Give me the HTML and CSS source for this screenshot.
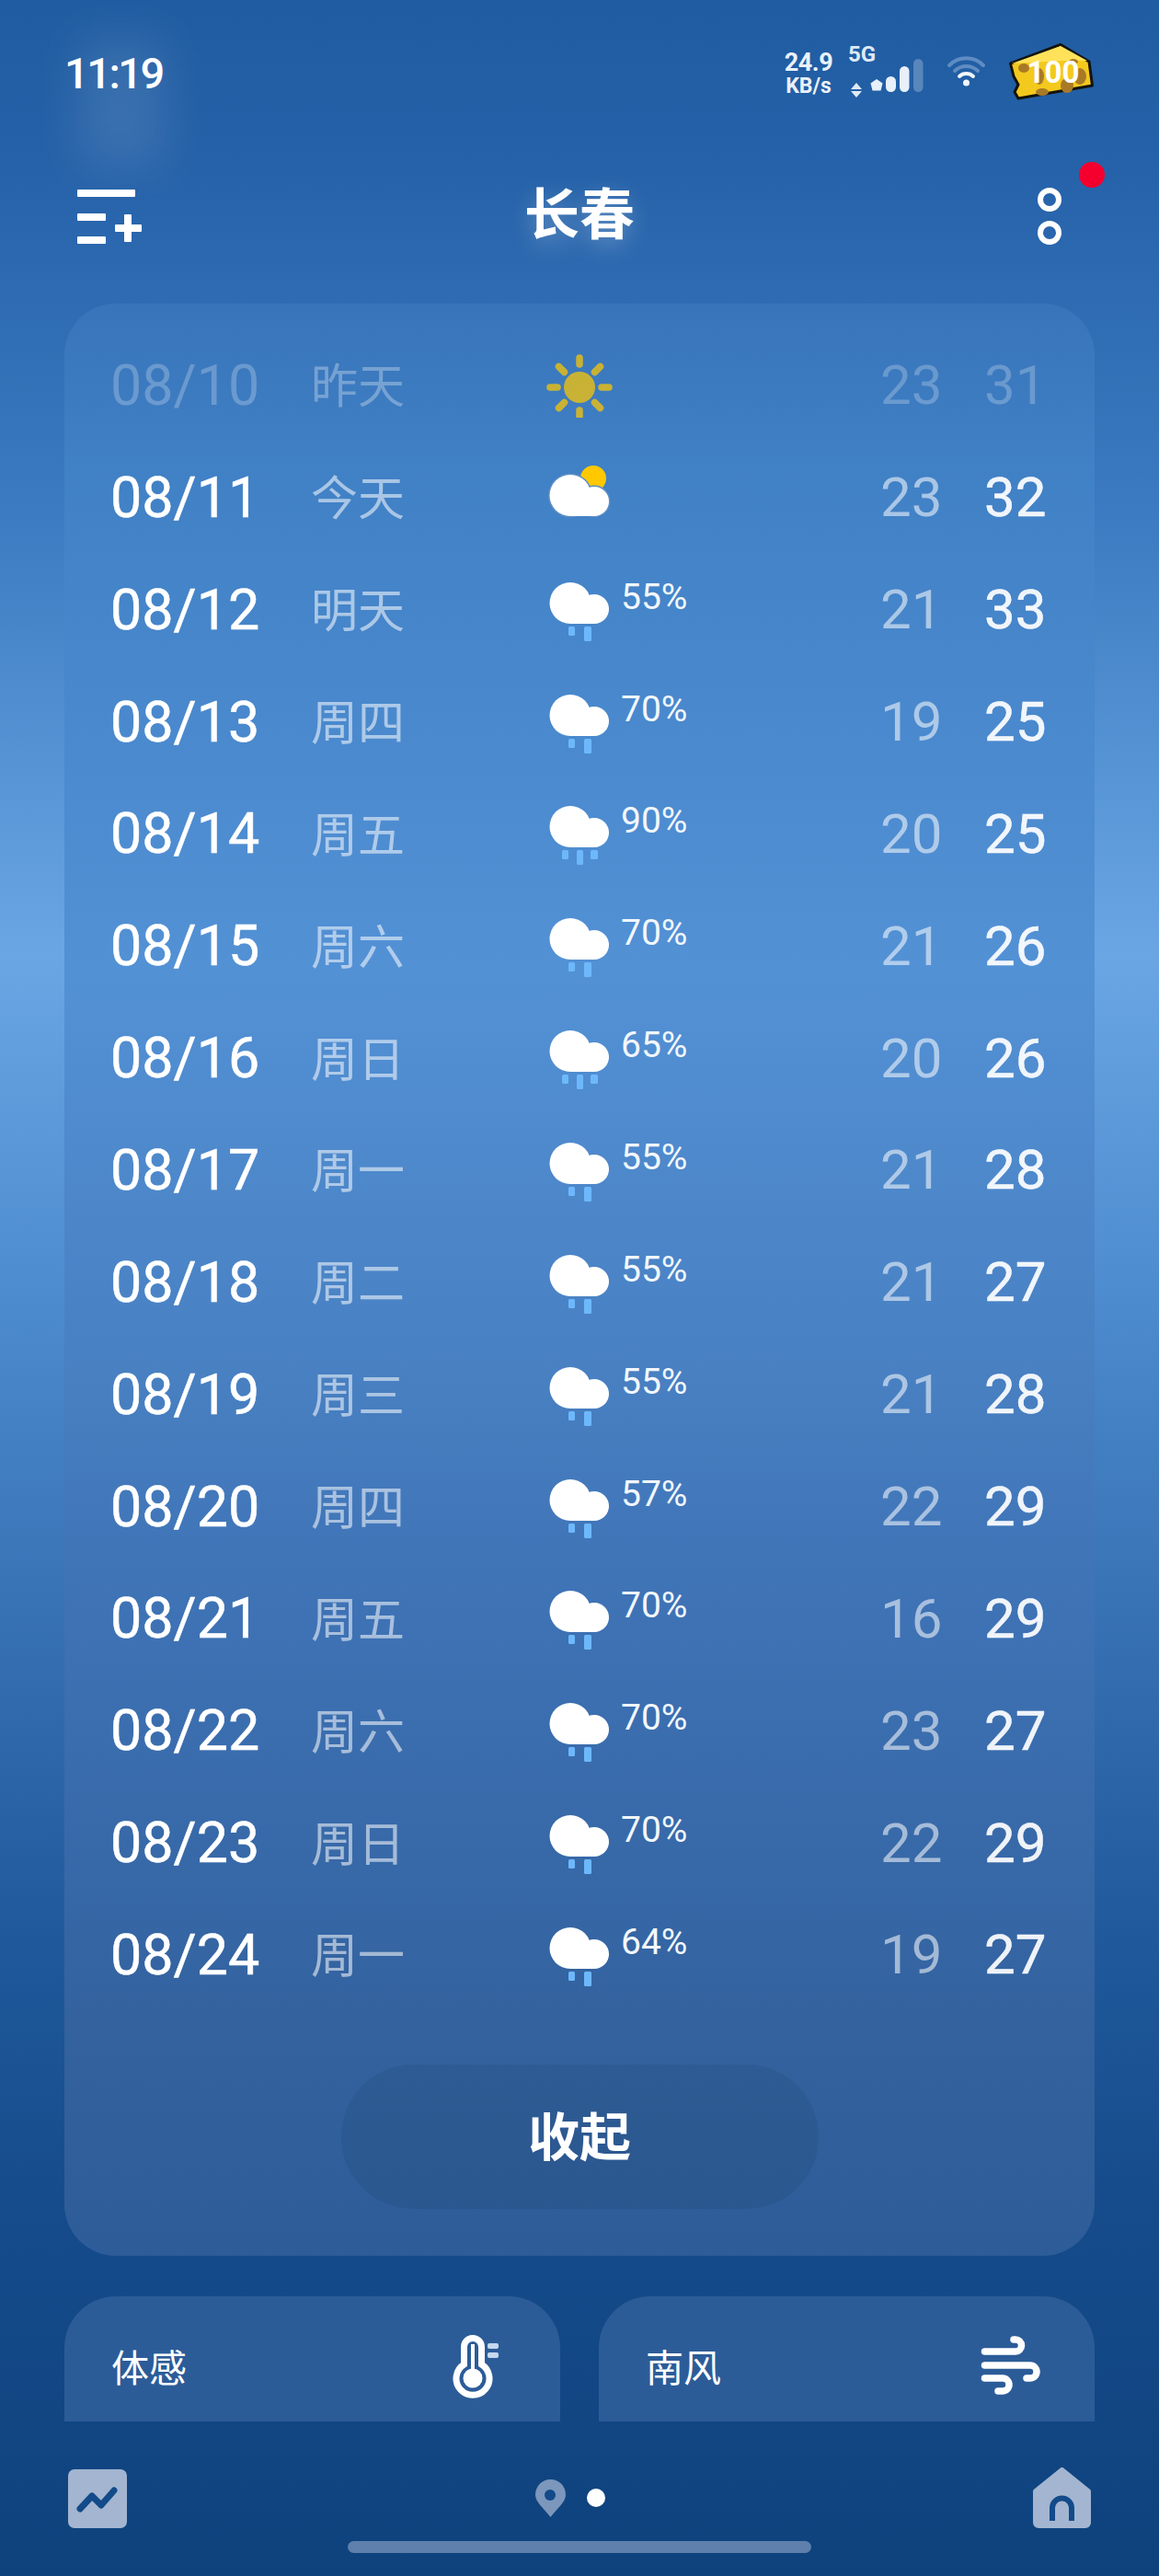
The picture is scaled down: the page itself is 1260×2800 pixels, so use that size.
FILE: index.html
```html
<!DOCTYPE html>
<html lang="zh-CN">

<head>
  <meta charset="UTF-8">
  <meta name="viewport" content="width=device-width, initial-scale=1.0">
  <title>长春</title>
  <link rel="stylesheet" href="styles.css">
</head>

<body>

  <svg class="defs" width="0" height="0">
    <symbol id="cloud" viewBox="0 0 72 72">
      <circle cx="26" cy="29.5" r="22.5" fill="#fff" />
      <circle cx="52" cy="36" r="16" fill="#fff" />
      <rect x="26" y="36" width="26" height="16" fill="#fff" />
    </symbol>
    <symbol id="rain2" viewBox="0 0 72 72">
      <use href="#cloud" width="72" height="72" />
      <rect x="24" y="55" width="7" height="10" rx="1.5" fill="#6db8fb" />
      <rect x="41" y="55" width="8" height="16" rx="1.5" fill="#6db8fb" />
    </symbol>
    <symbol id="rain3" viewBox="0 0 72 72">
      <use href="#cloud" width="72" height="72" />
      <rect x="17" y="55" width="7" height="10" rx="1.5" fill="#6db8fb" />
      <rect x="33" y="55" width="7" height="16" rx="1.5" fill="#6db8fb" />
      <rect x="48" y="55" width="8" height="10" rx="1.5" fill="#6db8fb" />
    </symbol>
  </svg>

  <div id="page">
    <div class="smudge"></div>

    <!-- status bar -->
    <div class="status">
      <div class="time">11:19</div>
      <div class="status-right">
        <div class="speed">
          <div class="speed-num">24.9</div>
          <div class="speed-unit">KB/s</div>
        </div>
        <svg class="signal" width="85" height="62" viewBox="920 47 85 62">
          <text x="922" y="67" class="net">5G</text>
          <path d="M931 90l6 7h-12zM931 106l6-7h-12z" fill="#dfe9f5" />
          <path d="M953 86l6.500 4.500-2 8h-9l-2-8z" fill="#e8f0f9" />
          <rect x="963" y="83" width="11" height="17" rx="5.500" fill="#e8f0f9" />
          <rect x="978" y="72" width="10.500" height="28" rx="5.250" fill="#e8f0f9" />
          <rect x="993" y="64" width="10.500" height="36" rx="5.250" fill="#fff" fill-opacity=".25" />
        </svg>
        <svg class="wifi" width="43" height="62" viewBox="0 0 43 62">
          <g fill="none" stroke-linecap="round" stroke-width="4">
            <path d="M3 24A26 26 0 0 1 40 24" stroke="#5f8cc2" />
            <path d="M9 30A18 18 0 0 1 34 30" stroke="#5f8cc2" />
            <path d="M14 36A11 11 0 0 1 29 36" stroke="#f2f6fb" />
          </g>
          <circle cx="21.500" cy="43" r="3.500" fill="#f2f6fb" />
        </svg>
        <svg class="cheese" width="92" height="62" viewBox="0 0 92 62">
          <path d="M1.500 22L56 1.500 87 20 90.500 46 10 60 6 53 10 45 5 36Z" fill="#f3c91d" stroke="#14130c" stroke-width="3" stroke-linejoin="round" />
          <path d="M3 22L56 3 85 19 60 19Z" fill="#ffe25a" />
          <g fill="#a97a26">
            <ellipse cx="16" cy="27" rx="6" ry="5" />
            <ellipse cx="33" cy="36" rx="5" ry="9" />
            <ellipse cx="63" cy="46" rx="7" ry="8" />
            <ellipse cx="77" cy="36" rx="7" ry="9" />
            <ellipse cx="70" cy="20" rx="5" ry="3" />
            <ellipse cx="36" cy="53" rx="7" ry="4" />
          </g>
          <text x="48" y="43" class="cheese-num">100</text>
        </svg>
      </div>
    </div>

    <!-- header -->
    <div class="header">
      <svg class="menu" width="70" height="124" viewBox="84 170 70 124">
        <g fill="#fff">
          <rect x="84" y="206" width="63" height="8" rx="1" />
          <rect x="84" y="232" width="31" height="8" rx="1" />
          <rect x="84" y="257" width="31" height="8" rx="1" />
          <rect x="125" y="244" width="29" height="8" rx="1" />
          <rect x="135" y="233" width="8" height="30" rx="1" />
        </g>
      </svg>
      <div class="city">长春</div>
      <svg class="more" width="73" height="124" viewBox="1128 170 73 124">
        <g fill="none" stroke="#fff" stroke-width="6">
          <circle cx="1141" cy="217" r="10" />
          <circle cx="1141" cy="253" r="10" />
        </g>
        <circle cx="1187" cy="190" r="14" fill="#f5002e" />
      </svg>
    </div>

    <!-- forecast -->
    <div class="card">
      <div class="row past">
        <div class="date">08/10</div>
        <div class="day">昨天</div>
        <svg class="icon sun" width="72" height="72" viewBox="0 0 72 72">
          <circle cx="36" cy="39" r="17" fill="#ffc800" />
          <g stroke="#ffc800" stroke-width="7.500" stroke-linecap="round">
            <path d="M36 7v7M36 64v7M4 39h8M60 39h8M13.500 16.500l6 6M52.500 55.500l6 6M13.500 61.500l6-6M52.500 22.500l6-6" />
          </g>
        </svg>
        <div class="pct"></div>
        <div class="low">23</div>
        <div class="high">31</div>
      </div>
      <div class="row">
        <div class="date">08/11</div>
        <div class="day">今天</div>
        <svg class="icon" width="72" height="72" viewBox="0 0 72 72">
          <circle cx="51" cy="16" r="14" fill="#ffc800" />
          <g transform="translate(0 5)" stroke="#5c8ec4" stroke-width="3">
            <circle cx="26" cy="29.500" r="22.500" fill="#fff" />
            <circle cx="52" cy="36" r="16" fill="#fff" />
          </g>
          <use href="#cloud" y="5" width="72" height="72" />
        </svg>
        <div class="pct"></div>
        <div class="low">23</div>
        <div class="high">32</div>
      </div>
      <div class="row">
        <div class="date">08/12</div>
        <div class="day">明天</div>
        <svg class="icon" width="72" height="72"><use href="#rain2" /></svg>
        <div class="pct">55%</div>
        <div class="low">21</div>
        <div class="high">33</div>
      </div>
      <div class="row">
        <div class="date">08/13</div>
        <div class="day">周四</div>
        <svg class="icon" width="72" height="72"><use href="#rain2" /></svg>
        <div class="pct">70%</div>
        <div class="low">19</div>
        <div class="high">25</div>
      </div>
      <div class="row">
        <div class="date">08/14</div>
        <div class="day">周五</div>
        <svg class="icon" width="72" height="72"><use href="#rain3" /></svg>
        <div class="pct">90%</div>
        <div class="low">20</div>
        <div class="high">25</div>
      </div>
      <div class="row">
        <div class="date">08/15</div>
        <div class="day">周六</div>
        <svg class="icon" width="72" height="72"><use href="#rain2" /></svg>
        <div class="pct">70%</div>
        <div class="low">21</div>
        <div class="high">26</div>
      </div>
      <div class="row">
        <div class="date">08/16</div>
        <div class="day">周日</div>
        <svg class="icon" width="72" height="72"><use href="#rain3" /></svg>
        <div class="pct">65%</div>
        <div class="low">20</div>
        <div class="high">26</div>
      </div>
      <div class="row">
        <div class="date">08/17</div>
        <div class="day">周一</div>
        <svg class="icon" width="72" height="72"><use href="#rain2" /></svg>
        <div class="pct">55%</div>
        <div class="low">21</div>
        <div class="high">28</div>
      </div>
      <div class="row">
        <div class="date">08/18</div>
        <div class="day">周二</div>
        <svg class="icon" width="72" height="72"><use href="#rain2" /></svg>
        <div class="pct">55%</div>
        <div class="low">21</div>
        <div class="high">27</div>
      </div>
      <div class="row">
        <div class="date">08/19</div>
        <div class="day">周三</div>
        <svg class="icon" width="72" height="72"><use href="#rain2" /></svg>
        <div class="pct">55%</div>
        <div class="low">21</div>
        <div class="high">28</div>
      </div>
      <div class="row">
        <div class="date">08/20</div>
        <div class="day">周四</div>
        <svg class="icon" width="72" height="72"><use href="#rain2" /></svg>
        <div class="pct">57%</div>
        <div class="low">22</div>
        <div class="high">29</div>
      </div>
      <div class="row">
        <div class="date">08/21</div>
        <div class="day">周五</div>
        <svg class="icon" width="72" height="72"><use href="#rain2" /></svg>
        <div class="pct">70%</div>
        <div class="low">16</div>
        <div class="high">29</div>
      </div>
      <div class="row">
        <div class="date">08/22</div>
        <div class="day">周六</div>
        <svg class="icon" width="72" height="72"><use href="#rain2" /></svg>
        <div class="pct">70%</div>
        <div class="low">23</div>
        <div class="high">27</div>
      </div>
      <div class="row">
        <div class="date">08/23</div>
        <div class="day">周日</div>
        <svg class="icon" width="72" height="72"><use href="#rain2" /></svg>
        <div class="pct">70%</div>
        <div class="low">22</div>
        <div class="high">29</div>
      </div>
      <div class="row">
        <div class="date">08/24</div>
        <div class="day">周一</div>
        <svg class="icon" width="72" height="72"><use href="#rain2" /></svg>
        <div class="pct">64%</div>
        <div class="low">19</div>
        <div class="high">27</div>
      </div>

      <div class="collapse">收起</div>
    </div>

    <!-- small cards, cut off by the bottom bar -->
    <div class="minis">
      <div class="mini">
        <div class="mini-label">体感</div>
        <svg width="100" height="100" viewBox="0 0 100 100">
          <path d="M35.500 50V31a9.500 9.500 0 0 1 19 0V50a18 18 0 1 1-19 0z" fill="none" stroke="#fff" stroke-width="7" />
          <rect x="43" y="28" width="4" height="34" fill="#fff" />
          <circle cx="45" cy="65" r="10.500" fill="#fff" />
          <rect x="61" y="27" width="12" height="6" rx="2" fill="#c5d8ee" />
          <rect x="61" y="37" width="12" height="6" rx="2" fill="#c5d8ee" />
        </svg>
      </div>
      <div class="mini">
        <div class="mini-label">南风</div>
        <svg width="100" height="100" viewBox="0 0 100 100">
          <g fill="none" stroke="#fff" stroke-width="7.500" stroke-linecap="round">
            <path d="M20.500 36H54a6.500 6.500 0 0 0 0-13H52" />
            <path d="M20.500 51H70a7 7 0 0 1 0 14H66" />
            <path d="M20.500 65H40a7 7 0 0 1 0 14H35" />
          </g>
        </svg>
      </div>
    </div>

    <!-- bottom bar -->
    <div class="nav">
      <div class="nav-row">
        <svg class="nav-left" width="64" height="66" viewBox="0 0 64 66">
          <rect y="2" width="64" height="64" rx="7" fill="#a3b5d0" />
          <path d="M13 45L26 31 36 41 50 25" fill="none" stroke="#124a8a" stroke-width="7" stroke-linecap="round" stroke-linejoin="round" />
        </svg>
        <div class="pager">
          <svg width="33" height="41" viewBox="0 0 33 41">
            <path d="M16.500 41C9 31 0 25 0 16.500a16.500 16.500 0 0 1 33 0C33 25 24 31 16.500 41z" fill="#7c97bb" />
            <circle cx="16" cy="17" r="6" fill="#124a8a" />
          </svg>
          <div class="pager-dot"></div>
        </div>
        <svg class="nav-right" width="63" height="66" viewBox="0 0 63 66">
          <path d="M31.500 3L60 26V60a3 3 0 0 1-3 3H6a3 3 0 0 1-3-3V26Z" fill="#a3b5d0" stroke="#a3b5d0" stroke-width="6" stroke-linejoin="round" />
          <path d="M21 58V44a10.500 10.500 0 0 1 21 0V58" fill="none" stroke="#124a8a" stroke-width="6" />
        </svg>
      </div>
      <div class="indicator"></div>
    </div>
  </div>

</body>

</html>
```

FILE: styles.css
```css
body {
  margin: 0;
  font-family: Roboto, "Noto Sans CJK SC", sans-serif;
  color: white;
}

.defs {
  position: absolute;
}

#page {
  position: relative;
  width: 1260px;
  height: 2800px;
  overflow: hidden;
  background: linear-gradient(180deg,
      #1f5ca1 0%,
      #2561a8 6%,
      #3c7bc1 20%,
      #6aa6e4 37%,
      #4d8ccf 50%,
      #3873b5 62%,
      #205a9c 75%,
      #164c8c 85%,
      #0e427d 100%);
}

.smudge {
  position: absolute;
  left: 85px;
  top: 40px;
  width: 95px;
  height: 140px;
  background: rgba(255, 255, 255, 0.1);
  filter: blur(24px);
}

/* status bar */

.status {
  position: relative;
  display: flex;
  justify-content: space-between;
  height: 123px;
  padding: 47px 71px 0 70px;
}

.time {
  font-size: 47px;
  font-weight: 500;
  line-height: 66px;
  letter-spacing: -2.5px;
}

.status-right {
  display: flex;
  height: 62px;
}

.speed {
  width: 56px;
  margin-right: 13px;
  padding-top: 8px;
  text-align: center;
  font-weight: 700;
  color: #eaf1f9;
}

.speed-num {
  font-size: 27px;
  line-height: 26px;
  letter-spacing: -0.5px;
}

.speed-unit {
  font-size: 23px;
  line-height: 25px;
}

.signal {
  margin-right: 24px;
}

.net {
  font-size: 24px;
  font-weight: 700;
  fill: #dfe9f5;
}

.wifi {
  margin-right: 25px;
}

.cheese-num {
  font-size: 33px;
  font-weight: 700;
  fill: #fff;
  text-anchor: middle;
}

/* header */

.header {
  display: grid;
  grid-template-columns: 1fr auto 1fr;
  height: 124px;
  margin-bottom: 36px;
  padding: 0 59px;
}

.menu {
  margin-left: 25px;
}

.more {
  justify-self: end;
}

.city {
  padding-top: 3px;
  font-size: 60px;
  font-weight: 700;
  line-height: 124px;
  text-shadow: 0 8px 24px rgba(255, 255, 255, 0.25);
}

/* forecast card */

.card {
  margin: 0 70px 44px;
  padding: 27px 50px 51px;
  height: 2122px;
  box-sizing: border-box;
  border-radius: 56px;
  background: linear-gradient(180deg,
      #3874ba 0%,
      #4080c5 8%,
      #5391d5 34%,
      #4880c2 55%,
      #3f74b7 65%,
      #33629f 88%,
      #2d5c98 100%);
}

.row {
  display: grid;
  grid-template-columns: 218px 256px 78px 285px 113px 1fr;
  align-items: center;
  height: 121.87px;
}

.date {
  padding-top: 2px;
  font-size: 61px;
  -webkit-text-stroke: 0.5px currentColor;
}

.day {
  padding-bottom: 3px;
  font-size: 51px;
  color: rgba(255, 255, 255, 0.55);
}

.icon {
  display: block;
}

.pct {
  margin-bottom: 26px;
  padding-left: 3px;
  font-size: 39px;
  color: #f2f7fc;
}

.low {
  padding-top: 2px;
  font-size: 60px;
  color: rgba(255, 255, 255, 0.55);
}

.high {
  padding-top: 2px;
  font-size: 60px;
  color: rgba(255, 255, 255, 0.92);
  -webkit-text-stroke: 0.5px currentColor;
}

.past .date,
.past .low,
.past .high {
  color: rgba(255, 255, 255, 0.24);
  -webkit-text-stroke: 0;
}

.past .day {
  color: rgba(255, 255, 255, 0.3);
}

.sun {
  opacity: 0.72;
}

.collapse {
  width: 519px;
  height: 157px;
  margin: 59px auto 0;
  padding-top: 3px;
  box-sizing: border-box;
  border-radius: 78px;
  background: rgba(0, 0, 0, 0.06);
  font-size: 56px;
  font-weight: 700;
  line-height: 154px;
  text-align: center;
}

/* small cards */

.minis {
  display: flex;
  gap: 42px;
  height: 136px;
  padding: 0 70px;
}

.mini {
  flex: 1;
  display: flex;
  justify-content: space-between;
  padding: 24px 40px 0 51px;
  border-radius: 56px 56px 0 0;
  background: #2c5c98;
}

.mini-label {
  padding-top: 23px;
  font-size: 41px;
  line-height: 64px;
}

/* bottom bar */

.nav {
  padding: 50px 74px 0;
}

.nav-row {
  display: grid;
  grid-template-columns: 1fr auto 1fr;
  align-items: center;
  height: 66px;
}

.nav-right {
  justify-self: end;
}

.pager {
  display: flex;
  align-items: center;
  gap: 23px;
  padding-right: 20px;
}

.pager-dot {
  width: 20px;
  height: 20px;
  border-radius: 50%;
  background: white;
}

.indicator {
  width: 504px;
  height: 13px;
  margin: 14px auto 0;
  border-radius: 7px;
  background: #5f80ac;
}
```
